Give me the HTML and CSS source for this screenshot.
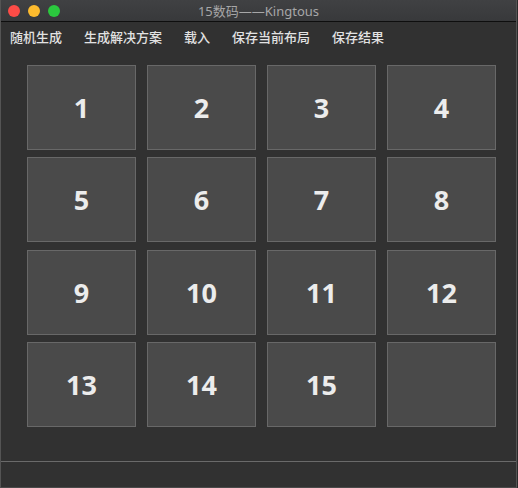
FILE: index.html
```html
<!DOCTYPE html>
<html lang="zh">
<head>
<meta charset="utf-8">
<link rel="stylesheet" href="styles.css">
</head>
<body>
<div class="window">
  <div class="titlebar">
    <div class="lights">
      <span class="light red"></span>
      <span class="light yellow"></span>
      <span class="light green"></span>
    </div>
    <div class="title">15数码——Kingtous</div>
  </div>
  <div class="menubar">
    <span class="menu-item">随机生成</span>
    <span class="menu-item">生成解决方案</span>
    <span class="menu-item">载入</span>
    <span class="menu-item">保存当前布局</span>
    <span class="menu-item">保存结果</span>
  </div>
  <div class="board">
    <div class="tile">1</div>
    <div class="tile">2</div>
    <div class="tile">3</div>
    <div class="tile">4</div>
    <div class="tile">5</div>
    <div class="tile">6</div>
    <div class="tile">7</div>
    <div class="tile">8</div>
    <div class="tile">9</div>
    <div class="tile">10</div>
    <div class="tile">11</div>
    <div class="tile">12</div>
    <div class="tile">13</div>
    <div class="tile">14</div>
    <div class="tile">15</div>
    <div class="tile"></div>
  </div>
  <div class="statusbar"></div>
</div>
</body>
</html>
```
FILE: styles.css
```css
html, body {
  margin: 0;
  padding: 0;
  background: #2b2b2b;
}
body {
  width: 518px;
  height: 488px;
  overflow: hidden;
  font-family: "Noto Sans CJK SC", "Open Sans", sans-serif;
}
.window {
  width: 517px;
  height: 488px;
  box-sizing: border-box;
  border-left: 1px solid #545454;
  border-right: 1px solid #545454;
  border-bottom: 1px solid #4a4a4a;
  background: #313131;
  display: flex;
  flex-direction: column;
}
.titlebar {
  height: 21px;
  flex: none;
  background: linear-gradient(#404143, #38393b);
  border-bottom: 1px solid #0e0e0e;
  display: flex;
  align-items: center;
  position: relative;
}
.lights {
  display: flex;
  gap: 8px;
  padding-left: 7px;
}
.light {
  width: 12px;
  height: 12px;
  border-radius: 50%;
  display: block;
}
.red { background: #fd4c47; }
.yellow { background: #fdbb2e; }
.green { background: #2bc83e; }
.title {
  position: absolute;
  left: 0;
  right: 0;
  top: 0;
  bottom: 0;
  display: flex;
  align-items: center;
  justify-content: center;
  color: #a7a7a8;
  font-size: 13px;
  font-family: "Noto Sans", "Noto Sans CJK SC", sans-serif;
}
.menubar {
  height: 28px;
  flex: none;
  display: flex;
  align-items: center;
  gap: 22px;
  padding-left: 9px;
  color: #e2e2e2;
  font-size: 13px;
  font-weight: 500;
  line-height: 1;
}
.board {
  flex: 1;
  display: grid;
  grid-template-columns: repeat(4, 109px);
  grid-template-rows: repeat(4, 85px);
  column-gap: 11px;
  row-gap: 7.33px;
  padding: 15px 0 0 26px;
}
.tile {
  box-sizing: border-box;
  background: #4a4a4a;
  border: 1px solid #686868;
  display: flex;
  align-items: center;
  justify-content: center;
  color: #ececec;
  font-family: "Open Sans", sans-serif;
  font-weight: 700;
  font-size: 27px;
}
.statusbar {
  height: 25px;
  flex: none;
  border-top: 1px solid #6a6a6a;
}
```
